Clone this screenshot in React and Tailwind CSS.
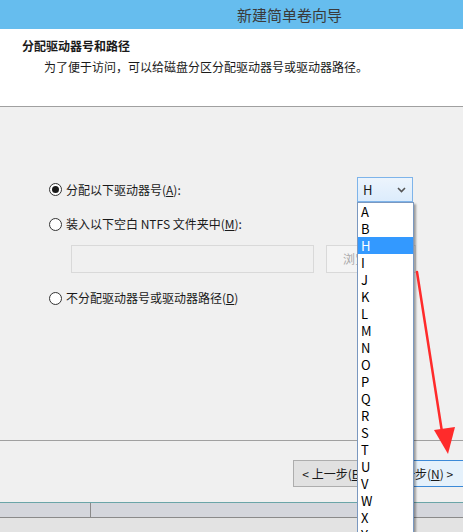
import React from "react";

const font = { fontFamily: '"Noto Sans CJK SC", "Noto Sans", sans-serif' };

const letters = ["A", "B", "H", "I", "J", "K", "L", "M", "N", "O", "P", "Q", "R", "S", "T", "U", "V", "W", "X", "Y", "Z"];

// windows-style radio button
const Radio = ({ checked }) => (
  <span className="w-[13px] h-[13px] rounded-full border border-[#333] bg-white flex items-center justify-center shrink-0">
    {checked && <span className="w-[7px] h-[7px] rounded-full bg-[#1a1a1a]" />}
  </span>
);

const App = () => {
  return (
    <div
      className="relative w-[463px] h-[532px] overflow-hidden bg-[#f0f0f0] text-[12px] text-[#1a1a1a] flex flex-col"
      style={font}
    >
      {/* title bar */}
      <div className="h-[29px] shrink-0 bg-[#66bdee] pl-[237px] text-[15px] leading-[29px] text-[#3a3a3a]">
        新建简单卷向导
      </div>

      {/* page header */}
      <div className="h-[78px] shrink-0 bg-white pt-[8px] pl-[22px] border-b border-[#a0a0a0]">
        <div className="font-bold leading-[17px]">分配驱动器号和路径</div>
        <div className="pl-[22px] mt-[4px] leading-[17px]">为了便于访问，可以给磁盘分区分配驱动器号或驱动器路径。</div>
      </div>

      {/* body */}
      <div className="h-[333px] shrink-0 pt-[70px]">
        <div className="flex items-center h-[25px] pl-[49px]">
          <div className="flex items-center gap-[4px] w-[308px]">
            <Radio checked />
            <span className="leading-[16px]">
              分配以下驱动器号(<span className="underline">A</span>):
            </span>
          </div>
          <div className="w-[56px] h-[25px] border border-[#7eb4ea] bg-gradient-to-b from-[#ecf4fc] to-[#dcecfc] flex items-center justify-between pl-[5px] pr-[6px]">
            <span className="text-[13px]">H</span>
            <svg width="9" height="6" viewBox="0 0 9 6">
              <path d="M1 1l3.5 3.5L8 1" fill="none" stroke="#555" strokeWidth="1.6" />
            </svg>
          </div>
        </div>

        <div className="flex items-center gap-[4px] h-[16px] pl-[49px] mt-[14px]">
          <Radio />
          <span className="leading-[16px]">
            装入以下空白 NTFS 文件夹中(<span className="underline">M</span>):
          </span>
        </div>

        <div className="flex items-center mt-[13px] pl-[71px]">
          <div className="w-[243px] h-[28px] border border-[#d9d9d9] bg-[#f0f0f0]" />
          <div className="ml-[12px] w-[90px] h-[28px] border border-[#d9d9d9] bg-[#f4f4f4] text-[#a8a8a8] flex items-center pl-[16px]">
            浏览(R)...
          </div>
        </div>

        <div className="flex items-center gap-[4px] h-[16px] pl-[49px] mt-[17px]">
          <Radio />
          <span className="leading-[16px]">
            不分配驱动器号或驱动器路径(<span className="underline">D</span>)
          </span>
        </div>
      </div>

      {/* footer buttons */}
      <div className="h-[62px] shrink-0 border-t border-[#a0a0a0] flex items-start pt-[19px] pl-[293px]">
        <div className="w-[80px] h-[27px] border border-[#adadad] bg-[#e1e1e1] flex items-center justify-center shrink-0">
          &lt; 上一步(<span className="underline">B</span>)
        </div>
        <div className="ml-[2px] w-[94px] h-[27px] border border-[#3c8ad8] bg-[#e5f1fb] flex items-center justify-center shrink-0">
          下一步(<span className="underline">N</span>) &gt;
        </div>
      </div>

      {/* bottom strip */}
      <div className="h-[15px] shrink-0 border-t border-[#6aa5a8] bg-[#d4d6dc] flex">
        <div className="w-[91px] border-r border-[#8a8a8a]" />
      </div>
      <div className="flex-1 border-t border-[#8a8a8a] bg-[#e3e3e3]" />

      {/* open dropdown list */}
      <div className="absolute left-[357px] top-[202px] w-[57px] h-[340px] bg-white border border-[#7a98c0] shadow-[2px_2px_2px_rgba(0,0,0,0.35)]">
        {letters.map((l) => (
          <div
            key={l}
            className={
              l === "H"
                ? "h-[17px] leading-[17px] pl-[3px] text-[13px] bg-[#3399ff] text-white"
                : "h-[17px] leading-[17px] pl-[3px] text-[13px] text-black"
            }
          >
            {l}
          </div>
        ))}
      </div>

      {/* red annotation arrow */}
      <svg className="absolute left-0 top-0 pointer-events-none" width="463" height="532">
        <path d="M417 272 L442 432" stroke="#ff2b2b" strokeWidth="2.5" fill="none" strokeLinecap="round" />
        <path d="M434 430 L455 427 L448 454 Z" fill="#ff2b2b" />
      </svg>
    </div>
  );
};

export default App;
